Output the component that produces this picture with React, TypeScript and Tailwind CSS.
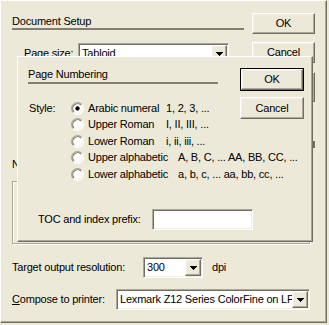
import React from "react";

const raised =
  "border border-t-white border-l-white border-r-[#716F64] border-b-[#716F64] shadow-[inset_-1px_-1px_0_#ACA899,inset_1px_1px_0_#F1EFE2]";
const sunken =
  "border border-t-[#ACA899] border-l-[#ACA899] border-r-white border-b-white shadow-[inset_1px_1px_0_#716F64,inset_-1px_-1px_0_#F1EFE2]";

function Arrow() {
  return (
    <svg width="7" height="4" viewBox="0 0 7 4" shapeRendering="crispEdges">
      <rect x="0" y="0" width="7" height="1" fill="#000" />
      <rect x="1" y="1" width="5" height="1" fill="#000" />
      <rect x="2" y="2" width="3" height="1" fill="#000" />
      <rect x="3" y="3" width="1" height="1" fill="#000" />
    </svg>
  );
}

function DropBtn() {
  return (
    <div className={"w-[16px] h-full shrink-0 flex items-center justify-center bg-[#ECE9D8] " + raised}>
      <Arrow />
    </div>
  );
}

function Radio({ checked }: { checked?: boolean }) {
  return (
    <svg width="13" height="13" viewBox="0 0 12 12" className="shrink-0">
      <circle cx="6" cy="6" r="5" fill="#fff" />
      <path d="M2.11 9.89 A5.5 5.5 0 0 1 9.89 2.11" stroke="#ACA899" strokeWidth="1" fill="none" />
      <path d="M9.89 2.11 A5.5 5.5 0 0 1 2.11 9.89" stroke="#fff" strokeWidth="1" fill="none" />
      <path d="M2.82 9.18 A4.5 4.5 0 0 1 9.18 2.82" stroke="#716F64" strokeWidth="1" fill="none" />
      <path d="M9.18 2.82 A4.5 4.5 0 0 1 2.82 9.18" stroke="#F1EFE2" strokeWidth="1" fill="none" />
      {checked && <circle cx="6" cy="6" r="2" fill="#000" />}
    </svg>
  );
}

function RadioRow({
  h,
  label,
  example,
  labelW,
  checked,
}: {
  h: string;
  label: string;
  example: string;
  labelW: string;
  checked?: boolean;
}) {
  return (
    <div className={h + " flex items-center"}>
      <Radio checked={checked} />
      <span className={"ml-[4px] shrink-0 whitespace-nowrap " + labelW}>{label}</span>
      <span className="whitespace-nowrap">{example}</span>
    </div>
  );
}

export default function App() {
  return (
    <div className="relative w-[329px] h-[325px] bg-[#ECE9D8] text-[11px] leading-[13px] text-black tracking-[-0.2px] font-['Liberation_Sans',Arial,sans-serif] overflow-hidden">
      {/* Outer Document Setup window */}
      <div className="w-[327px] h-[323px] border border-t-white border-l-white border-r-[#716F64] border-b-[#716F64] shadow-[inset_-1px_-1px_0_#ACA899] flex flex-col">
        <div className="flex">
          <div className="flex-1 min-w-0 pl-[11px] pt-[14px]">
            <div className="h-[13px] whitespace-nowrap">Document Setup</div>
            <div className="w-[232px] h-[2px] bg-[#817E72]" />
            <div className="mt-[13px] h-[21px] flex items-center pl-[12px]">
              <span className="w-[54px] shrink-0 whitespace-nowrap">Page size:</span>
              <div className={"w-[151px] shrink-0 h-full bg-white p-[1px] flex " + sunken}>
                <div className="flex-1 pl-[2px] flex items-center">Tabloid</div>
                <DropBtn />
              </div>
            </div>
          </div>
          <div className="w-[63px] shrink-0 mr-[11px] pt-[12px] flex flex-col">
            <div className={"h-[21px] flex items-center justify-center " + raised}>OK</div>
            <div className={"mt-[8px] h-[21px] flex items-center justify-center " + raised}>Cancel</div>
            <div className={"mt-[9px] h-[30px] " + raised} />
            <div className="mt-[39px] h-[7px] w-[2px] self-end bg-[#716F64]" />
          </div>
        </div>

        <div className="pl-[11px] flex flex-col">
          <div className="mt-[10px] h-[13px] whitespace-nowrap">Numbering</div>
          <div className="mt-[10px] w-[298px] h-[63px] border border-[#ACA899] shadow-[1px_1px_0_#fff,inset_1px_1px_0_#fff]" />
          <div className="mt-[13px] h-[21px] flex items-center">
            <span className="w-[131px] shrink-0 whitespace-nowrap">
              Tar<span className="underline">g</span>et output resolution:
            </span>
            <div className={"w-[60px] shrink-0 h-full bg-white p-[1px] flex " + sunken}>
              <div className="flex-1 pl-[2px] flex items-center">300</div>
              <DropBtn />
            </div>
            <span className="ml-[9px]">dpi</span>
          </div>
          <div className="mt-[11px] h-[21px] flex items-center">
            <span className="w-[104px] shrink-0 whitespace-nowrap">
              <span className="underline">C</span>ompose to printer:
            </span>
            <div className={"w-[194px] shrink-0 h-full bg-white p-[1px] flex " + sunken}>
              <div className="flex-1 min-w-0 overflow-hidden whitespace-nowrap pl-[2px] flex items-center">
                Lexmark Z12 Series ColorFine on LPT1
              </div>
              <DropBtn />
            </div>
          </div>
        </div>
      </div>

      {/* Page Numbering dialog over it */}
      <div className="absolute left-[17px] top-[56px] w-[296px] h-[186px] bg-[#ECE9D8] border border-t-white border-l-white border-r-[#716F64] border-b-[#716F64] shadow-[inset_-1px_-1px_0_#ACA899] flex flex-col">
        <div className="flex">
          <div className="flex-1 min-w-0 pl-[10px] pt-[11px]">
            <div className="h-[13px] whitespace-nowrap">Page Numbering</div>
            <div className="mt-[1px] w-[190px] h-[2px] bg-[#817E72]" />
            <div className="mt-[16px] flex">
              <div className="ml-[1px] w-[42px] shrink-0 h-[16px] flex items-center">Style:</div>
              <div className="flex flex-col">
                <RadioRow h="h-[16px]" checked label="Arabic numeral" example="1, 2, 3, ..." labelW="w-[78px]" />
                <RadioRow h="h-[17px]" label="Upper Roman" example="I, II, III, ..." labelW="w-[78px]" />
                <RadioRow h="h-[16px]" label="Lower Roman" example="i, ii, iii, ..." labelW="w-[78px]" />
                <RadioRow h="h-[17px]" label="Upper alphabetic" example="A, B, C, ... AA, BB, CC, ..." labelW="w-[90px]" />
                <RadioRow h="h-[16px]" label="Lower alphabetic" example="a, b, c, ... aa, bb, cc, ..." labelW="w-[90px]" />
              </div>
            </div>
          </div>
          <div className="w-[64px] shrink-0 mr-[8px] pt-[11px] flex flex-col">
            <div className="h-[23px] border border-black">
              <div className={"h-full flex items-center justify-center " + raised}>OK</div>
            </div>
            <div className={"mt-[6px] h-[22px] flex items-center justify-center " + raised}>Cancel</div>
          </div>
        </div>
        <div className="mt-[27px] pl-[20px] h-[21px] flex items-center">
          <span className="w-[114px] shrink-0 whitespace-nowrap">TOC and index prefix:</span>
          <div className={"w-[101px] shrink-0 h-full bg-white " + sunken} />
        </div>
      </div>
    </div>
  );
}
